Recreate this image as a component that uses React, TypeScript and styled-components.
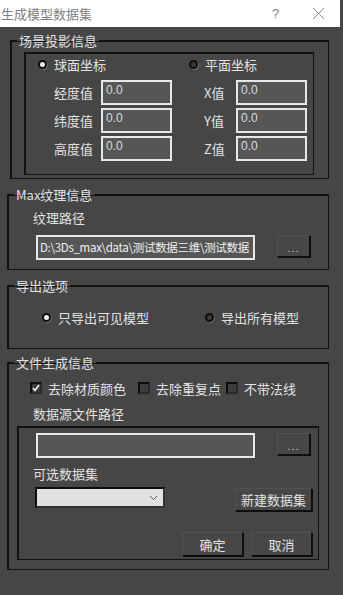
import React from "react";
import styled, { createGlobalStyle } from "styled-components";

const GlobalStyle = createGlobalStyle`
  html, body {
    margin: 0;
    padding: 0;
    background: #464646;
  }
  body {
    font-family: "Noto Sans CJK SC", "Liberation Sans", sans-serif;
    color: #dcdcdc;
    font-size: 12px;
  }
`;

const Window = styled.div`
  width: 343px;
  height: 595px;
  background: #464646;
  overflow: hidden;
`;

const TitleBar = styled.div`
  height: 27px;
  background: #fff;
  display: flex;
  align-items: center;
  margin-right: 3px;
`;

const TitleText = styled.span`
  flex: 1;
  padding-left: 1px;
  font-size: 13px;
  color: #808080;
`;

const TitleHelp = styled.span`
  width: 40px;
  font-family: "Liberation Sans", sans-serif;
  font-size: 13px;
  color: #808080;
`;

const TitleClose = styled.span`
  width: 28px;
  display: flex;
  align-items: center;
`;

const Body = styled.div`
  display: flex;
  flex-direction: column;
  padding: 6px 14px 0 7px;
`;

const Group = styled.fieldset<{ $indent?: number; $gap?: number }>`
  margin: 0 0 ${(p) => p.$gap ?? 7}px ${(p) => p.$indent ?? 0}px;
  padding: 0;
  border: 1px solid #121212;
  box-shadow: 1px 1px 0 #121212 inset;
  min-width: 0;
`;

const Legend = styled.legend`
  margin-left: 6px;
  padding: 0 2px;
  font-size: 13px;
  line-height: 15px;
  color: #e2e2e2;
`;

const InnerBox = styled.div<{ $m: string; $h: number }>`
  margin: ${(p) => p.$m};
  height: ${(p) => p.$h}px;
  border: 1px solid #121212;
  box-shadow: 1px 1px 0 #121212 inset;
  box-sizing: border-box;
  display: flex;
  flex-direction: column;
`;

const RadioRow = styled.div<{ $pl: number; $h: number; $first: number; $mb?: number }>`
  display: grid;
  grid-template-columns: ${(p) => p.$first}px auto;
  align-items: center;
  padding-left: ${(p) => p.$pl}px;
  height: ${(p) => p.$h}px;
  margin-bottom: ${(p) => p.$mb ?? 0}px;
`;

const RadioItem = styled.label`
  display: flex;
  align-items: center;
  gap: 7px;
  font-size: 13px;
  color: #e2e2e2;
`;

const RadioDot = styled.span<{ $on?: boolean }>`
  width: 9px;
  height: 9px;
  border-radius: 50%;
  background: ${(p) => (p.$on ? "#f0f0f0" : "#3a3a3a")};
  border: 2px solid #0e0e0e;
  box-shadow: 1px 1px 0 #6a6a6a;
  box-sizing: border-box;
`;

const CoordGrid = styled.div`
  display: grid;
  grid-template-columns: 47px 71px 32px 32px 71px;
  grid-auto-rows: 25px;
  row-gap: 3px;
  align-items: center;
  padding-left: 29px;
`;

const Label = styled.span`
  font-size: 13px;
  color: #e2e2e2;
`;

const NumInput = styled.div`
  height: 25px;
  box-sizing: border-box;
  border: 2px solid #e8e8e8;
  background: #565656;
  padding: 0 3px;
  font-family: "Liberation Sans", sans-serif;
  font-size: 12px;
  line-height: 17px;
  color: #dcdcdc;
`;

const FieldLabel = styled.div<{ $h: number; $pl?: number }>`
  height: ${(p) => p.$h}px;
  display: flex;
  align-items: center;
  padding-left: ${(p) => p.$pl ?? 25}px;
  font-size: 13px;
  color: #e2e2e2;
`;

const PathRow = styled.div<{ $pl: number; $h: number; $pt?: number }>`
  display: flex;
  align-items: flex-start;
  gap: 22px;
  padding-left: ${(p) => p.$pl}px;
  padding-top: ${(p) => p.$pt ?? 0}px;
  height: ${(p) => p.$h}px;
`;

const PathInput = styled.div`
  width: 219px;
  height: 25px;
  box-sizing: border-box;
  border: 2px solid #e8e8e8;
  background: #565656;
  padding: 0 2px;
  font-size: 11.5px;
  line-height: 21px;
  color: #f0f0f0;
  white-space: nowrap;
  overflow: hidden;
  letter-spacing: -0.3px;
`;

const Button = styled.button<{ $w: number; $h: number }>`
  width: ${(p) => p.$w}px;
  height: ${(p) => p.$h}px;
  margin: 0;
  padding: 0;
  background: #474747;
  border: 1px solid #0e0e0e;
  border-top-color: #525252;
  border-left-color: #525252;
  box-shadow: 1px 1px 0 #0e0e0e;
  font-family: "Noto Sans CJK SC", sans-serif;
  font-size: 13px;
  color: #e2e2e2;
  display: flex;
  align-items: center;
  justify-content: center;
`;

const Dots = styled.span`
  font-family: "Liberation Sans", sans-serif;
  font-size: 11px;
  letter-spacing: 1px;
  color: #d0d0d0;
  margin-top: 3px;
`;

const CheckRow = styled.div`
  display: flex;
  align-items: center;
  height: 24px;
  padding: 6px 0 0 22px;
`;

const CheckItem = styled.label<{ $w: number }>`
  width: ${(p) => p.$w}px;
  display: flex;
  align-items: center;
  gap: 6px;
  font-size: 13px;
  color: #e2e2e2;
`;

const CheckBox = styled.span`
  width: 12px;
  height: 12px;
  box-sizing: border-box;
  background: #3c3c3c;
  border: 2px solid #0e0e0e;
  border-right-color: #2a2a2a;
  border-bottom-color: #2a2a2a;
  display: flex;
  align-items: center;
  justify-content: center;
`;

const SelectRow = styled.div`
  display: flex;
  align-items: flex-start;
  justify-content: space-between;
  padding: 0 6px 0 17px;
  height: 30px;
`;

const Select = styled.div`
  width: 130px;
  height: 21px;
  box-sizing: border-box;
  background: #e2e2e2;
  border: 2px solid #0e0e0e;
  border-right-color: #333;
  border-bottom-color: #333;
  display: flex;
  align-items: center;
  justify-content: flex-end;
  padding-right: 5px;
`;

const FooterRow = styled.div`
  display: flex;
  justify-content: flex-end;
  gap: 8px;
  padding: 15px 6px 0 0;
`;

const radios = (a: string, b: string, aOn: boolean) => (
  <>
    <RadioItem>
      <RadioDot $on={aOn} />
      {a}
    </RadioItem>
    <RadioItem>
      <RadioDot $on={!aOn} />
      {b}
    </RadioItem>
  </>
);

const CloseIcon = () => (
  <svg width="13" height="13" viewBox="0 0 13 13">
    <path d="M1 1 L12 12 M12 1 L1 12" stroke="#8a8a8a" strokeWidth="1" fill="none" />
  </svg>
);

const CheckMark = () => (
  <svg width="8" height="8" viewBox="0 0 8 8">
    <path d="M1 4 L3 6.5 L7 1" stroke="#f2f2f2" strokeWidth="1.6" fill="none" />
  </svg>
);

const Chevron = () => (
  <svg width="9" height="6" viewBox="0 0 9 6">
    <path d="M1 1 L4.5 4.5 L8 1" stroke="#555" strokeWidth="1" fill="none" />
  </svg>
);

const coords: [string, string][] = [
  ["经度值", "X值"],
  ["纬度值", "Y值"],
  ["高度值", "Z值"],
];

export default function App() {
  return (
    <Window>
      <GlobalStyle />
      <TitleBar>
        <TitleText>生成模型数据集</TitleText>
        <TitleHelp>?</TitleHelp>
        <TitleClose>
          <CloseIcon />
        </TitleClose>
      </TitleBar>
      <Body>
        <Group $indent={3} $gap={8}>
          <Legend>场景投影信息</Legend>
          <InnerBox $m="4px 14px 3px 13px" $h={123}>
            <RadioRow $pl={13} $h={22} $mb={5} $first={151}>
              {radios("球面坐标", "平面坐标", true)}
            </RadioRow>
            <CoordGrid>
              {coords.map(([a, b]) => (
                <React.Fragment key={a}>
                  <Label>{a}</Label>
                  <NumInput>0.0</NumInput>
                  <span />
                  <Label>{b}</Label>
                  <NumInput>0.0</NumInput>
                </React.Fragment>
              ))}
            </CoordGrid>
          </InnerBox>
        </Group>

        <Group $gap={8}>
          <Legend>Max纹理信息</Legend>
          <FieldLabel $h={30}>纹理路径</FieldLabel>
          <PathRow $pl={28} $h={34} $pt={3}>
            <PathInput>D:\3Ds_max\data\测试数据三维\测试数据</PathInput>
            <Button $w={33} $h={22}>
              <Dots>...</Dots>
            </Button>
          </PathRow>
        </Group>

        <Group $gap={6}>
          <Legend>导出选项</Legend>
          <RadioRow $pl={34} $h={48} $mb={7} $first={163}>
            {radios("只导出可见模型", "导出所有模型", true)}
          </RadioRow>
        </Group>

        <Group $gap={0}>
          <Legend>文件生成信息</Legend>
          <CheckRow>
            <CheckItem $w={108}>
              <CheckBox>
                <CheckMark />
              </CheckBox>
              去除材质颜色
            </CheckItem>
            <CheckItem $w={88}>
              <CheckBox />
              去除重复点
            </CheckItem>
            <CheckItem $w={90}>
              <CheckBox />
              不带法线
            </CheckItem>
          </CheckRow>
          <FieldLabel $h={26}>数据源文件路径</FieldLabel>
          <InnerBox $m="0 9px 9px 9px" $h={134}>
            <PathRow $pl={18} $h={26} $pt={6}>
              <PathInput />
              <Button $w={33} $h={22}>
                <Dots>...</Dots>
              </Button>
            </PathRow>
            <FieldLabel $h={28} $pl={15}>
              可选数据集
            </FieldLabel>
            <SelectRow>
              <Select>
                <Chevron />
              </Select>
              <Button $w={77} $h={23} style={{ marginTop: 1 }}>
                新建数据集
              </Button>
            </SelectRow>
            <FooterRow>
              <Button $w={61} $h={24}>确定</Button>
              <Button $w={61} $h={24}>取消</Button>
            </FooterRow>
          </InnerBox>
        </Group>
      </Body>
    </Window>
  );
}
